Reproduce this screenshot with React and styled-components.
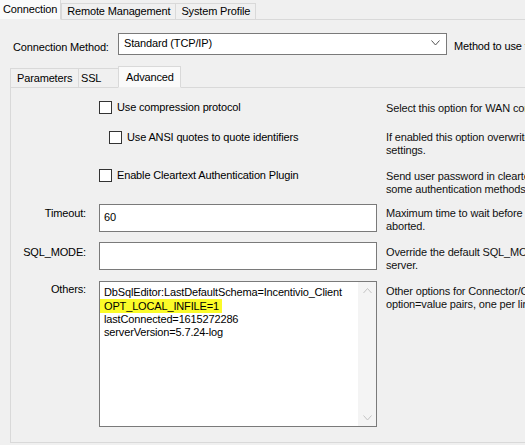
import React from "react";
import styled, { createGlobalStyle } from "styled-components";

const Global = createGlobalStyle`
  html, body { margin: 0; padding: 0; background: #f0f0f0; }
  body { font-family: "Liberation Sans", Arial, sans-serif; font-size: 11px; letter-spacing: -0.15px; color: #000; }
  #root { width: 525px; height: 445px; overflow: hidden; }
`;

const Page = styled.div`
  width: 525px;
  height: 445px;
  overflow: hidden;
  background: #f0f0f0;
`;

const TabStrip = styled.div`
  display: flex;
  align-items: flex-end;
  height: 19px;
  border-bottom: 1px solid #d9d9d9;
  width: 600px;
  padding-left: ${(p) => p.$indent || 0}px;
`;

const Tab = styled.div`
  box-sizing: border-box;
  flex: none;
  height: ${(p) => (p.$active ? p.$h + 2 : p.$h)}px;
  width: ${(p) => (p.$w ? `${p.$w}px` : "auto")};
  margin-bottom: -1px;
  padding: 0 ${(p) => p.$pr ?? p.$pad}px 0 ${(p) => p.$pad}px;
  display: flex;
  align-items: center;
  background: ${(p) => (p.$active ? "#fafafa" : "#f0f0f0")};
  border: 1px solid #d9d9d9;
  border-bottom: ${(p) => (p.$active ? "1px solid #f0f0f0" : "1px solid #d9d9d9")};
  border-left-width: ${(p) => (p.$noLeft ? 0 : 1)}px;
  margin-left: ${(p) => (p.$overlap ? -1 : 0)}px;
  white-space: nowrap;
  line-height: 13px;
  position: relative;
  z-index: ${(p) => (p.$active ? 1 : 0)};
`;

const MethodRow = styled.div`
  display: flex;
  align-items: center;
  margin-top: 13px;
  height: 22px;
  white-space: nowrap;
`;

const MethodLabel = styled.div`
  flex: none;
  box-sizing: border-box;
  width: 118px;
  padding-left: 13px;
  padding-top: 5px;
`;

const Combo = styled.div`
  flex: none;
  box-sizing: border-box;
  width: 329px;
  height: 22px;
  background: #fff;
  border: 1px solid #7a7a7a;
  display: flex;
  align-items: center;
  justify-content: space-between;
  padding: 0 6px 2px 5px;
`;

const ComboHint = styled.div`
  flex: none;
  margin-left: 7px;
  padding-top: 3px;
`;

const InnerTabs = styled(TabStrip)`
  margin-top: 11px;
  height: 21px;
  border-bottom: none;
  width: auto;
`;

const Panel = styled.div`
  box-sizing: border-box;
  margin-left: 10px;
  width: 600px;
  height: 356px;
  border: 1px solid #d9d9d9;
  background: #f0f0f0;
  padding-top: 13px;
`;

const Row = styled.div`
  display: grid;
  grid-template-columns: 88px 278px 1fr;
  height: ${(p) => p.$h}px;
`;

const FieldLabel = styled.div`
  text-align: right;
  padding-right: 13px;
  padding-top: ${(p) => p.$top || 0}px;
  line-height: 13px;
  white-space: nowrap;
`;

const CheckLine = styled.label`
  display: flex;
  align-items: center;
  gap: 5px;
  height: 13px;
  padding-left: ${(p) => p.$indent || 0}px;
  white-space: nowrap;
  line-height: 13px;
`;

const Box = styled.span`
  box-sizing: border-box;
  width: 13px;
  height: 13px;
  border: 1px solid #333;
  background: #fff;
  flex: none;
`;

const Desc = styled.div`
  padding-left: 9px;
  padding-top: ${(p) => p.$top || 0}px;
  line-height: 12.5px;
  white-space: nowrap;
  color: #111;
`;

const Input = styled.div`
  box-sizing: border-box;
  height: 28px;
  background: #fff;
  border: 1px solid #7a7a7a;
  padding: 6px 4px;
  line-height: 13px;
`;

const TextArea = styled.div`
  box-sizing: border-box;
  height: 146px;
  background: #fff;
  border: 1px solid #7a7a7a;
  display: flex;
`;

const TextBody = styled.div`
  flex: 1;
  padding: 4px 0 0 4px;
  line-height: 13px;
  white-space: nowrap;
  overflow: hidden;
`;

const Mark = styled.span`
  display: inline-block;
  background: #fbfb29;
  margin-left: -4px;
  padding: 0 3px 0 4px;
  height: 14px;
  line-height: 14px;
`;

const ScrollBar = styled.div`
  width: 18px;
  background: #f4f4f4;
  display: flex;
  flex-direction: column;
  justify-content: space-between;
  align-items: center;
  padding: 6px 0 5px;
`;

const Chevron = ({ up, color = "#555", w = 9, h = 5 }) => (
  <svg width={w} height={h + 1} viewBox={`0 0 ${w} ${h + 1}`}>
    <polyline
      points={up ? `0.5,${h} ${w / 2},0.5 ${w - 0.5},${h}` : `0.5,0.5 ${w / 2},${h} ${w - 0.5},0.5`}
      fill="none"
      stroke={color}
      strokeWidth="1"
    />
  </svg>
);

export default function App() {
  return (
    <Page>
      <Global />
      <TabStrip>
        <Tab $active $h={19} $pad={3} $noLeft>Connection</Tab>
        <Tab $h={17} $pad={5}>Remote Management</Tab>
        <Tab $h={17} $pad={5} $overlap>System Profile</Tab>
      </TabStrip>

      <MethodRow>
        <MethodLabel>Connection Method:</MethodLabel>
        <Combo>
          <span>Standard (TCP/IP)</span>
          <Chevron />
        </Combo>
        <ComboHint>Method to use to connect to the RDBMS</ComboHint>
      </MethodRow>

      <InnerTabs $indent={10}>
        <Tab $h={20} $pad={6} $w={69}>Parameters</Tab>
        <Tab $h={20} $pad={2} $w={41} $overlap>SSL</Tab>
        <Tab $active $h={20} $pad={7} $w={63} $overlap>Advanced</Tab>
      </InnerTabs>

      <Panel>
        <Row $h={30}>
          <span />
          <CheckLine><Box />Use compression protocol</CheckLine>
          <Desc $top={1}>Select this option for WAN connections.</Desc>
        </Row>
        <Row $h={38}>
          <span />
          <CheckLine $indent={10}><Box />Use ANSI quotes to quote identifiers</CheckLine>
          <Desc $top={0}>If enabled this option overwrites the serverside<br />settings.</Desc>
        </Row>
        <Row $h={35}>
          <span />
          <CheckLine><Box />Enable Cleartext Authentication Plugin</CheckLine>
          <Desc $top={1}>Send user password in cleartext. Required for<br />some authentication methods.</Desc>
        </Row>
        <Row $h={38}>
          <FieldLabel $top={3}>Timeout:</FieldLabel>
          <Input>60</Input>
          <Desc $top={3}>Maximum time to wait before a connection is<br />aborted.</Desc>
        </Row>
        <Row $h={39}>
          <FieldLabel $top={4}>SQL_MODE:</FieldLabel>
          <Input />
          <Desc $top={4}>Override the default SQL_MODE used by the<br />server.</Desc>
        </Row>
        <Row $h={146}>
          <FieldLabel $top={2}>Others:</FieldLabel>
          <TextArea>
            <TextBody>
              DbSqlEditor:LastDefaultSchema=Incentivio_Client<br />
              <Mark>OPT_LOCAL_INFILE=1</Mark><br />
              lastConnected=1615272286<br />
              serverVersion=5.7.24-log
            </TextBody>
            <ScrollBar>
              <Chevron up color="#c4c4c4" w={9} h={5} />
              <Chevron color="#c4c4c4" w={9} h={5} />
            </ScrollBar>
          </TextArea>
          <Desc $top={4}>Other options for Connector/C++ as<br />option=value pairs, one per line.</Desc>
        </Row>
      </Panel>
    </Page>
  );
}
